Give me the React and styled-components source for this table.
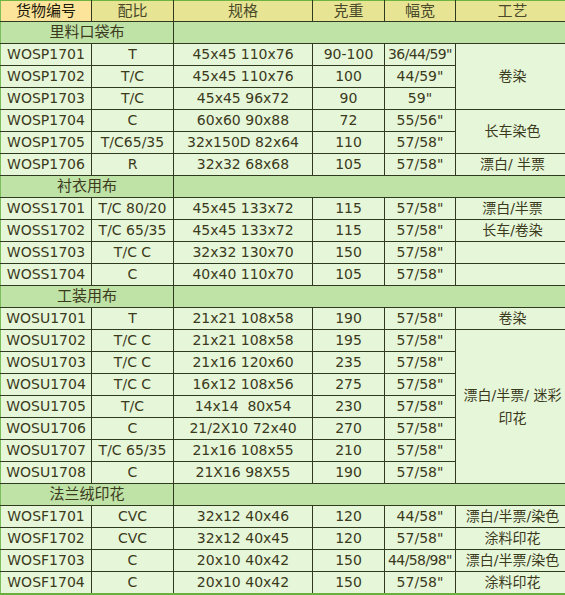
import React from 'react'
import styled, { createGlobalStyle } from 'styled-components'

const GlobalStyle = createGlobalStyle`
    html, body {
        margin: 0;
        padding: 0;
        overflow: hidden;
        background: #ffffff;
    }
`

const sections = [
    {
        title: '里料口袋布',
        rows: [
            ['WOSP1701', 'T', '45x45 110x76', '90-100', '36/44/59"', { text: '卷染', span: 3 }],
            ['WOSP1702', 'T/C', '45x45 110x76', '100', '44/59"'],
            ['WOSP1703', 'T/C', '45x45 96x72', '90', '59"'],
            ['WOSP1704', 'C', '60x60 90x88', '72', '55/56"', { text: '长车染色', span: 2 }],
            ['WOSP1705', 'T/C65/35', '32x150D 82x64', '110', '57/58"'],
            ['WOSP1706', 'R', '32x32 68x68', '105', '57/58"', { text: '漂白/ 半票' }],
        ],
    },
    {
        title: '衬衣用布',
        rows: [
            ['WOSS1701', 'T/C 80/20', '45x45 133x72', '115', '57/58"', { text: '漂白/半票' }],
            ['WOSS1702', 'T/C 65/35', '45x45 133x72', '115', '57/58"', { text: '长车/卷染' }],
            ['WOSS1703', 'T/C C', '32x32 130x70', '150', '57/58"', { text: '' }],
            ['WOSS1704', 'C', '40x40 110x70', '105', '57/58"', { text: '' }],
        ],
    },
    {
        title: '工装用布',
        rows: [
            ['WOSU1701', 'T', '21x21 108x58', '190', '57/58"', { text: '卷染' }],
            ['WOSU1702', 'T/C C', '21x21 108x58', '195', '57/58"', { text: ['漂白/半票/ 迷彩', '印花'], span: 7 }],
            ['WOSU1703', 'T/C C', '21x16 120x60', '235', '57/58"'],
            ['WOSU1704', 'T/C C', '16x12 108x56', '275', '57/58"'],
            ['WOSU1705', 'T/C', '14x14\u00a0 80x54', '230', '57/58"'],
            ['WOSU1706', 'C', '21/2X10 72x40', '270', '57/58"'],
            ['WOSU1707', 'T/C 65/35', '21x16 108x55', '210', '57/58"'],
            ['WOSU1708', 'C', '21X16 98X55', '190', '57/58"'],
        ],
    },
    {
        title: '法兰绒印花',
        rows: [
            ['WOSF1701', 'CVC', '32x12 40x46', '120', '44/58"', { text: '漂白/半票/染色' }],
            ['WOSF1702', 'CVC', '32x12 40x45', '120', '57/58"', { text: '涂料印花' }],
            ['WOSF1703', 'C', '20x10 40x42', '150', '44/58/98"', { text: '漂白/半票/染色' }],
            ['WOSF1704', 'C', '20x10 40x42', '150', '57/58"', { text: '涂料印花' }],
        ],
    },
]

const headers = ['货物编号', '配比', '规格', '克重', '幅宽', '工艺']
const widths = [91, 82, 139, 72, 71, 114]

function App() {
    return (
        <>
            <GlobalStyle />
            <Table>
                <colgroup>
                    {widths.map((w, i) => <col key={i} style={{ width: w }} />)}
                </colgroup>
                <thead>
                    <tr>
                        {headers.map((h, i) => (
                            <HeadCell key={h} first={i === 0}>{h}</HeadCell>
                        ))}
                    </tr>
                </thead>
                <tbody>
                    {sections.map((section) => (
                        <React.Fragment key={section.title}>
                            <tr>
                                <SectionCell colSpan={2}>{section.title}</SectionCell>
                                <SectionCell colSpan={4}></SectionCell>
                            </tr>
                            {section.rows.map((row) => {
                                const craft = row[5]
                                return (
                                    <tr key={row[0]}>
                                        <Cell>{row[0]}</Cell>
                                        <Cell>{row[1]}</Cell>
                                        <Cell>{row[2]}</Cell>
                                        <Cell>{row[3]}</Cell>
                                        <Cell tight={row[4].length > 7}>{row[4]}</Cell>
                                        {craft && (
                                            <Cell rowSpan={craft.span || 1}>
                                                {Array.isArray(craft.text)
                                                    ? craft.text.map((t) => <Line key={t}>{t}</Line>)
                                                    : craft.text}
                                            </Cell>
                                        )}
                                    </tr>
                                )
                            })}
                        </React.Fragment>
                    ))}
                </tbody>
            </Table>
        </>
    )
}

export default App

const Table = styled.table`
    border-collapse: collapse;
    table-layout: fixed;
    width: 569px;
    border-top: 1px solid #6fb443;
    border-left: 1px solid #7cbf5a;
    border-bottom: 3px solid #6aaf3e;
    font-family: "DejaVu Sans", "Noto Sans CJK SC", sans-serif;
    font-size: 14px;
    color: #3b3a1c;
`
const HeadCell = styled.th`
    height: 20px;
    padding: 0;
    line-height: 20px;
    font-weight: normal;
    font-size: 15px;
    text-align: center;
    color: ${(p) => (p.first ? '#1a1a0a' : '#4a4a2a')};
    background: ${(p) => (p.first ? '#fde49b' : '#e7e493')};
    border-right: 1px solid #2f3a1f;
    border-bottom: 1px solid #2f3a1f;
    white-space: nowrap;
`
const SectionCell = styled.td`
    height: 21px;
    padding: 0;
    line-height: 21px;
    font-size: 15px;
    text-align: center;
    background: #bfe2a7;
    border-right: 1px solid #2f3a1f;
    border-bottom: 1px solid #2f3a1f;
    white-space: nowrap;
`
const Cell = styled.td`
    height: 21px;
    padding: 0;
    line-height: 21px;
    text-align: center;
    vertical-align: middle;
    background: #e6f6d9;
    border-right: 1px solid #2f3a1f;
    border-bottom: 1px solid #2f3a1f;
    white-space: nowrap;
    overflow: hidden;
    letter-spacing: ${(p) => (p.tight ? '-0.6px' : '0')};
`
const Line = styled.div`
    line-height: 23px;
`
